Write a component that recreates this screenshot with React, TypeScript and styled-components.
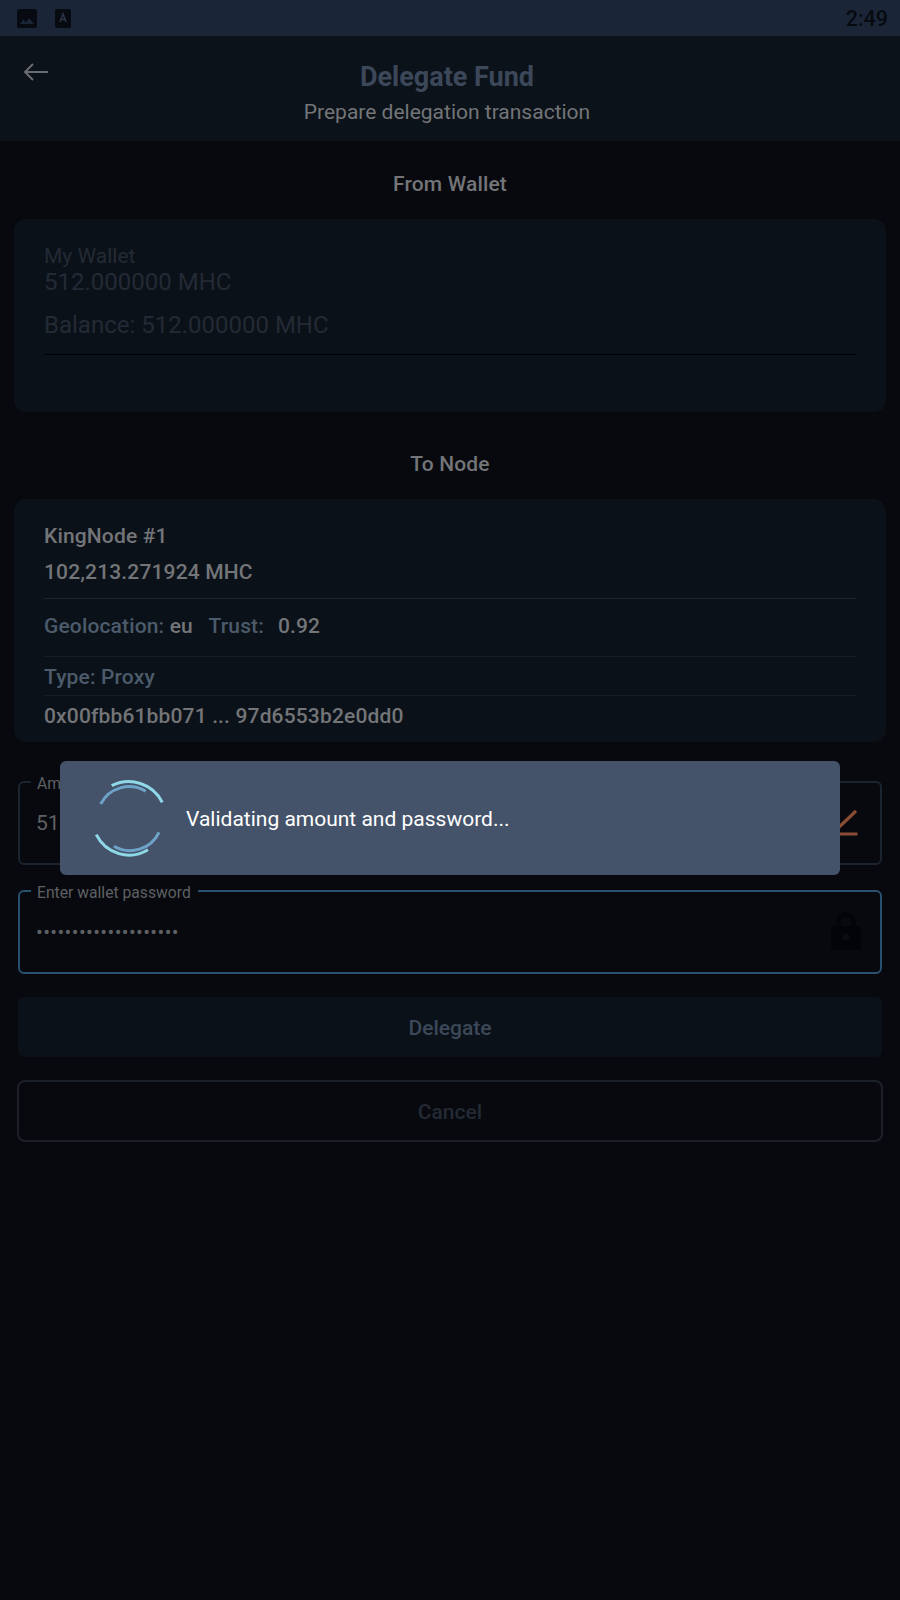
import * as React from 'react'
import styled, { createGlobalStyle } from 'styled-components'

const Global = createGlobalStyle`
    html, body {
        margin: 0;
        padding: 0;
        background: #07090e;
    }
    * {
        box-sizing: border-box;
    }
`
const Page = styled.div`
    position: relative;
    width: 900px;
    height: 1600px;
    background: #07090e;
    font-family: Roboto, 'Liberation Sans', sans-serif;
    overflow: hidden;
`
const StatusBar = styled.div`
    height: 36px;
    background: #1a2637;
    display: flex;
    align-items: center;
    padding: 0 12px 0 17px;
    gap: 18px;
`
const Clock = styled.div`
    margin-left: auto;
    font-size: 21.5px;
    font-weight: 500;
    color: #070a10;
`
const Header = styled.header`
    position: relative;
    height: 105px;
    background: #0b1219;
    display: flex;
    flex-direction: column;
    align-items: center;
    padding: 25px 6px 0 0;
`
const BackButton = styled.button`
    position: absolute;
    left: 22px;
    top: 22px;
    width: 28px;
    height: 28px;
    padding: 0;
    border: 0;
    background: none;
    display: flex;
`
const Title = styled.h1`
    margin: 0;
    font-size: 27px;
    line-height: 32px;
    font-weight: 700;
    color: #3c4859;
`
const Subtitle = styled.p`
    margin: 6px 0 0;
    font-size: 21px;
    line-height: 26px;
    color: #737578;
`
const SectionLabel = styled.h2<{ $top: number }>`
    margin: ${p => p.$top}px 0 0;
    height: 26px;
    line-height: 26px;
    text-align: center;
    font-size: 21px;
    letter-spacing: 0.15px;
    font-weight: 500;
    color: #737578;
`
const Card = styled.section<{ $height: number; $top: number }>`
    display: flow-root;
    height: ${p => p.$height}px;
    margin: ${p => p.$top}px 14px 0;
    padding: 0 30px;
    background: #0b1118;
    border-radius: 12px;
`
const WalletName = styled.div`
    padding-top: 24px;
    font-size: 21px;
    line-height: 26px;
    color: #232a35;
`
const WalletAmount = styled.div`
    font-size: 24px;
    line-height: 26px;
    color: #232a35;
`
const WalletBalance = styled.div`
    margin-top: 17px;
    font-size: 24px;
    line-height: 26px;
    color: #232a35;
`
const Rule = styled.div<{ $color: string; $top: number }>`
    height: 1px;
    margin-top: ${p => p.$top}px;
    background: ${p => p.$color};
`
const NodeLine = styled.div<{ $top: number }>`
    margin-top: ${p => p.$top}px;
    font-size: 21px;
    letter-spacing: 0.15px;
    line-height: 26px;
    font-weight: 500;
    color: #737578;
    white-space: pre;
`
const Muted = styled.span`
    color: #4c5b6b;
`
const TrustValue = styled.span`
    margin-left: 14px;
`
const Field = styled.div<{ $active?: boolean; $top: number }>`
    position: relative;
    height: 84px;
    margin: ${p => p.$top}px 18px 0;
    padding: 24px 16px 0;
    display: flex;
    border: 2px solid ${p => (p.$active ? '#28506f' : '#1c242f')};
    border-radius: 6px;
`
const FieldLabel = styled.label`
    position: absolute;
    left: 11px;
    top: -9px;
    padding: 0 7px 0 6px;
    background: linear-gradient(#07090e, #07090e) 0 0 / 100% 9px no-repeat;
    font-size: 15.7px;
    line-height: 20px;
    color: #5e6063;
`
const FieldValue = styled.div<{ $dots?: boolean }>`
    color: #5e6063;
    font-size: ${p => (p.$dots ? '20px' : '21px')};
    letter-spacing: ${p => (p.$dots ? '0.4px' : '0')};
    line-height: 32px;
`
const FieldIcon = styled.div<{ $lift: number }>`
    margin: ${p => -p.$lift}px 3px 0 auto;
    display: flex;
`
const Primary = styled.button`
    display: block;
    width: 864px;
    height: 60px;
    margin: 23px 18px 0;
    padding-top: 2px;
    border: 0;
    border-radius: 6px;
    background: #0b1118;
    color: #3c4859;
    font-family: inherit;
    font-size: 21px;
    font-weight: 500;
`
const Secondary = styled.button`
    display: block;
    width: 866px;
    height: 62px;
    margin: 23px 17px 0;
    padding-top: 3px;
    border: 2px solid #1c2129;
    border-radius: 8px;
    background: none;
    color: #232a35;
    font-family: inherit;
    font-size: 21px;
    font-weight: 500;
`
const Toast = styled.div`
    position: absolute;
    left: 60px;
    top: 761px;
    width: 780px;
    height: 114px;
    display: flex;
    align-items: center;
    padding: 2px 0 0 27px;
    gap: 15px;
    background: #445369;
    border-radius: 6px;
    color: #fff;
    font-size: 21px;
`

const Spinner = () => (
    <svg width="84" height="84" viewBox="-42 -42 84 84" fill="none" strokeWidth="3">
        <path d="M-28.3 -15 A32 32 0 0 1 16.7 -27.7" stroke="#6ea3c9" />
        <path d="M-15 27.3 A32 32 0 0 0 30 13.3" stroke="#6ea3c9" />
        <path d="M-17.3 -33.3 A37.5 37.5 0 0 1 33.3 -16.7" stroke="#8fd8e8" />
        <path d="M-32.7 15.7 A36.5 36.5 0 0 0 19 30.7" stroke="#8fd8e8" />
    </svg>
)

const ImageIcon = () => (
    <svg width="20" height="19" viewBox="0 0 20 19" fill="#070a10">
        <path d="M2 0h16a2 2 0 0 1 2 2v15a2 2 0 0 1-2 2H2a2 2 0 0 1-2-2V2a2 2 0 0 1 2-2z" />
        <path d="M3 15l3.500-4.500 2.500 3 3-4.500 5 6z" fill="#1a2637" />
    </svg>
)

const AppIcon = () => (
    <svg width="16" height="19" viewBox="0 0 16 19">
        <rect width="16" height="19" rx="2" fill="#070a10" />
        <path d="M5 13l3-8 3 8M6.200 10.500h3.600" fill="none" stroke="#2a3546" strokeWidth="1.5" />
    </svg>
)

const BackArrow = () => (
    <svg width="28" height="28" viewBox="0 0 28 28" fill="none" stroke="#6a6c6f" strokeWidth="2">
        <path d="M3 14h23M11 6l-8 8 8 8" />
    </svg>
)

const CheckIcon = () => (
    <svg width="28" height="30" viewBox="0 0 28 30" fill="none" stroke="#8a4c33" strokeWidth="3.2">
        <path d="M3 23L23 4M0 27h24.500" />
    </svg>
)

const LockIcon = () => (
    <svg width="30" height="38" viewBox="0 0 30 38" fill="#030409">
        <path d="M5 14V10a10 10 0 0 1 20 0v4h1a4 4 0 0 1 4 4v16a4 4 0 0 1-4 4H4a4 4 0 0 1-4-4V18a4 4 0 0 1 4-4zm4.500 0h11V10a5.500 5.500 0 0 0-11 0z" fillRule="evenodd" />
        <circle cx="15" cy="25" r="3.500" fill="#0a0c12" />
    </svg>
)

export default function App() {
    return (
        <Page>
            <Global />
            <StatusBar>
                <ImageIcon />
                <AppIcon />
                <Clock>2:49</Clock>
            </StatusBar>
            <Header>
                <BackButton>
                    <BackArrow />
                </BackButton>
                <Title>Delegate Fund</Title>
                <Subtitle>Prepare delegation transaction</Subtitle>
            </Header>
            <SectionLabel $top={30}>From Wallet</SectionLabel>
            <Card $height={193} $top={22}>
                <WalletName>My Wallet</WalletName>
                <WalletAmount>512.000000 MHC</WalletAmount>
                <WalletBalance>Balance: 512.000000 MHC</WalletBalance>
                <Rule $color="#000" $top={16} />
            </Card>
            <SectionLabel $top={39}>To Node</SectionLabel>
            <Card $height={243} $top={22}>
                <NodeLine $top={24}>KingNode #1</NodeLine>
                <NodeLine $top={10}>102,213.271924 MHC</NodeLine>
                <Rule $color="#1c242f" $top={13} />
                <NodeLine $top={14}>
                    <Muted>Geolocation: </Muted>eu{'   '}<Muted>Trust:</Muted>
                    <TrustValue>0.92</TrustValue>
                </NodeLine>
                <Rule $color="#161d26" $top={17} />
                <NodeLine $top={7}>
                    <Muted>Type: Proxy</Muted>
                </NodeLine>
                <Rule $color="#161d26" $top={5} />
                <NodeLine $top={7}>0x00fbb61bb071 ... 97d6553b2e0dd0</NodeLine>
            </Card>
            <Field $top={39}>
                <FieldLabel>Amount</FieldLabel>
                <FieldValue>512.000000</FieldValue>
                <FieldIcon $lift={0}>
                    <CheckIcon />
                </FieldIcon>
            </Field>
            <Field $active $top={25}>
                <FieldLabel>Enter wallet password</FieldLabel>
                <FieldValue $dots>••••••••••••••••••••</FieldValue>
                <FieldIcon $lift={4}>
                    <LockIcon />
                </FieldIcon>
            </Field>
            <Primary>Delegate</Primary>
            <Secondary>Cancel</Secondary>
            <Toast>
                <Spinner />
                Validating amount and password...
            </Toast>
        </Page>
    )
}
